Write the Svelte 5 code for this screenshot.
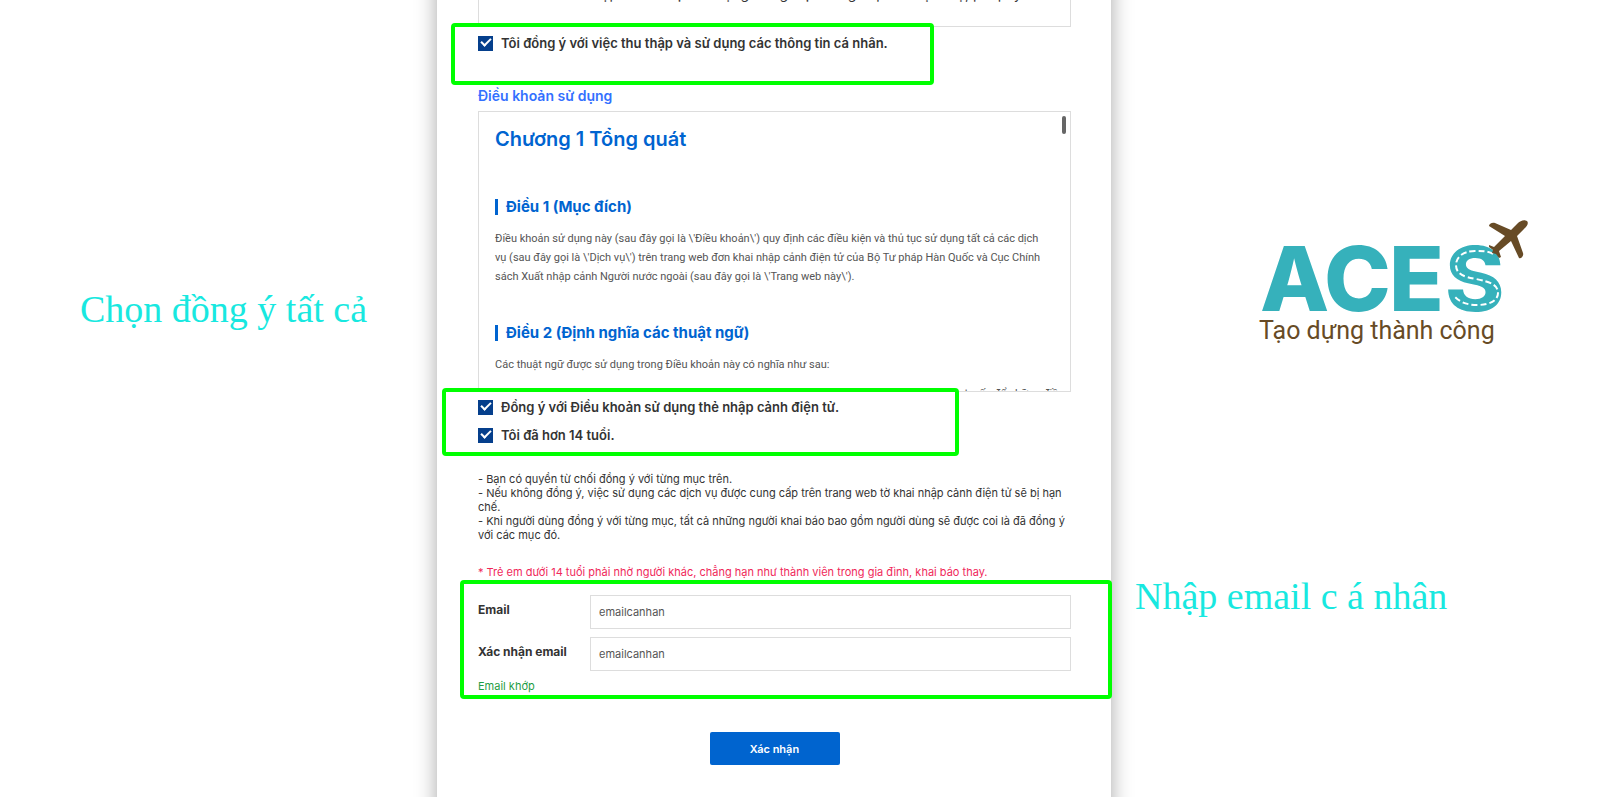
<script lang="ts">
  let agreePrivacy = $state(true);
  let agreeTerms = $state(true);
  let over14 = $state(true);
  let email = $state("emailcanhan");
  let emailConfirm = $state("emailcanhan");

  let matched = $derived(email !== "" && email === emailConfirm);

  const notes = [
    "- Bạn có quyền từ chối đồng ý với từng mục trên.",
    "- Nếu không đồng ý, việc sử dụng các dịch vụ được cung cấp trên trang web tờ khai nhập cảnh điện tử sẽ bị hạn chế.",
    "- Khi người dùng đồng ý với từng mục, tất cả những người khai báo bao gồm người dùng sẽ được coi là đã đồng ý với các mục đó.",
  ];
</script>

<div class="page">
  <aside class="left">
    <p class="caption">Chọn đồng ý tất cả</p>
  </aside>

  <main class="panel">
    <div class="privacy">
      <p>nhập cảnh được sử dụng trong việc cung cấp các dịch vụ, pháp lý</p>
    </div>

    <div class="group first">
      <label class="check">
        <input type="checkbox" bind:checked={agreePrivacy} />
        Tôi đồng ý với việc thu thập và sử dụng các thông tin cá nhân.
      </label>
      <div class="mark"></div>
    </div>

    <h1>Điều khoản sử dụng</h1>
    <section class="terms">
      <h2>Chương 1 Tổng quát</h2>
      <h3>Điều 1 (Mục đích)</h3>
      <p>
        Điều khoản sử dụng này (sau đây gọi là \'Điều khoản\') quy định các điều
        kiện và thủ tục sử dụng tất cả các dịch<br />vụ (sau đây gọi là \'Dịch
        vụ\') trên trang web đơn khai nhập cảnh điện tử của Bộ Tư pháp Hàn Quốc
        và Cục Chính<br />sách Xuất nhập cảnh Người nước ngoài (sau đây gọi là
        \'Trang web này\').
      </p>
      <h3>Điều 2 (Định nghĩa các thuật ngữ)</h3>
      <p>Các thuật ngữ được sử dụng trong Điều khoản này có nghĩa như sau:</p>
      <p class="clipped">
        1. Tờ khai nhập cảnh điện tử là trang web do Bộ Tư pháp cung cấp cho
        người dùng khai báo trực tuyến để những điều
      </p>
      <span class="thumb"></span>
    </section>

    <div class="group second">
      <label class="check">
        <input type="checkbox" bind:checked={agreeTerms} />
        Đồng ý với Điều khoản sử dụng thẻ nhập cảnh điện tử.
      </label>
      <label class="check">
        <input type="checkbox" bind:checked={over14} />
        Tôi đã hơn 14 tuổi.
      </label>
      <div class="mark"></div>
    </div>

    <div class="notes">
      {#each notes as note}
        <p>{note}</p>
      {/each}
    </div>

    <p class="warning">
      * Trẻ em dưới 14 tuổi phải nhờ người khác, chẳng hạn như thành viên trong
      gia đình, khai báo thay.
    </p>

    <div class="group third">
      <div class="field">
        <label for="email">Email</label>
        <input id="email" type="text" bind:value={email} />
      </div>
      <div class="field">
        <label for="email-confirm">Xác nhận email</label>
        <input id="email-confirm" type="text" bind:value={emailConfirm} />
      </div>
      <p class="status">{matched ? "Email khớp" : ""}</p>
      <div class="mark"></div>
    </div>

    <button class="submit">Xác nhận</button>
  </main>

  <aside class="right">
    <svg class="logo" viewBox="0 0 280 135" role="img" aria-label="ACES">
      <text class="brand" x="5 69 134 190" y="96">ACES</text>
      <path
        class="road"
        d="M238 39C233 36 227 36 220 36C207 36 201 43 201 50C201 59 209 62 221 64C236 67 243 70 243 78C243 86 234 90 222 90C212 90 205 87 200 82"
      />
      <path
        class="plane"
        d="M272 6C269 4 265 6 263 8L256 15L240 8C237 7 234 9 234 11L250 21L239 32L234 30V32L238 35L237 38L241 39L244 43L246 42L244 36L256 26L264 43C266 44 269 41 268 38L262 21L269 14C272 11 274 8 272 6Z"
      />
      <text class="slogan" x="4" y="124">Tạo dựng thành công</text>
    </svg>
    <p class="caption">Nhập email c á nhân</p>
  </aside>
</div>

<style>
  :global(body) {
    margin: 0;
    background: #fff;
  }

  .page {
    display: grid;
    grid-template-columns: minmax(0, 437fr) minmax(0, 674fr) minmax(0, 489fr);
    min-height: 100vh;
    overflow: hidden;
    font-family: Inter, "Noto Sans", sans-serif;
    font-size: 11px;
    color: #333;
  }

  p,
  h1,
  h2,
  h3 {
    margin: 0;
  }

  .caption {
    font-family: "Liberation Serif", serif;
    font-size: 38px;
    line-height: 44px;
    color: #18e8e0;
    white-space: nowrap;
  }

  .left {
    padding: 287px 0 0 80px;
  }

  .right {
    padding: 215px 0 0 24px;
  }

  .right .logo {
    display: block;
    width: 280px;
    margin: 0 0 224px 120px;
  }

  /* runs past the top and bottom so the side shadows stay even */
  .panel {
    box-sizing: border-box;
    margin: -30px 0;
    padding: 30px 40px 60px 41px;
    background: #fff;
    box-shadow: 0 0 20px rgba(0, 0, 0, 0.35);
  }

  .privacy {
    box-sizing: border-box;
    height: 27px;
    padding-left: 106px;
    overflow: hidden;
    border: 1px solid #ddd;
    border-top: 0;
  }

  .privacy p {
    margin-top: -14px;
    font-size: 14px;
    line-height: 16px;
    white-space: nowrap;
  }

  .group {
    position: relative;
  }

  .mark {
    position: absolute;
    border: 4px solid #0f0;
    border-radius: 4px;
    pointer-events: none;
  }

  .first {
    padding: 6px 0 34px;
  }

  .first .mark {
    inset: -4px 137px 2px -27px;
  }

  .check {
    display: flex;
    align-items: center;
    gap: 8px;
    height: 20px;
    font-size: 13px;
    font-weight: 600;
    white-space: nowrap;
  }

  .check input {
    display: grid;
    place-items: center;
    width: 15px;
    height: 15px;
    margin: 0;
    appearance: none;
    background: #053f8c;
  }

  .check input:checked::before {
    content: "";
    width: 10px;
    height: 6px;
    margin-bottom: 4px;
    border: solid #fff;
    border-width: 0 0 2px 2px;
    box-sizing: border-box;
    transform: rotate(-45deg);
  }

  h1 {
    font-size: 14px;
    font-weight: 600;
    line-height: 18px;
    color: #3370ff;
  }

  .terms {
    position: relative;
    box-sizing: border-box;
    height: 281px;
    margin-top: 6px;
    padding: 15px 16px 0;
    overflow: hidden;
    border: 1px solid #ddd;
    color: #555;
  }

  h2 {
    margin-bottom: 48px;
    font-size: 20px;
    font-weight: 600;
    line-height: 24px;
    color: #0064d0;
  }

  h3 {
    margin-bottom: 14px;
    padding-left: 8px;
    border-left: 3px solid #0064d0;
    font-size: 15px;
    font-weight: 700;
    line-height: 16px;
    color: #0064d0;
  }

  .terms p {
    font-family: Roboto, "Noto Sans", sans-serif;
    line-height: 19px;
    white-space: nowrap;
  }

  .terms p + h3 {
    margin-top: 39px;
  }

  .terms .clipped {
    margin-top: 10px;
  }

  .thumb {
    position: absolute;
    top: 4px;
    right: 4px;
    width: 4px;
    height: 18px;
    border-radius: 2px;
    background: #666;
  }

  .second {
    display: flex;
    flex-direction: column;
    gap: 8px;
    padding-top: 5px;
  }

  .second .mark {
    inset: -4px 112px -11px -36px;
  }

  .notes {
    margin-top: 27px;
    line-height: 14px;
  }

  .warning {
    margin-top: 22px;
    line-height: 16px;
    color: #f0285a;
    white-space: nowrap;
  }

  .third {
    display: flex;
    flex-direction: column;
    gap: 8px;
    padding-top: 15px;
  }

  .third .mark {
    inset: 0 -41px -4px -18px;
  }

  .field {
    display: flex;
  }

  .field label {
    width: 112px;
    padding-top: 6px;
    font-size: 12px;
    font-weight: 700;
    line-height: 18px;
  }

  .field input {
    box-sizing: border-box;
    flex: 1;
    height: 34px;
    padding: 0 8px;
    border: 1px solid #ddd;
    font: inherit;
    color: #555;
  }

  .status {
    height: 16px;
    line-height: 14px;
    color: #1f9d45;
  }

  .submit {
    display: block;
    width: 130px;
    height: 33px;
    margin: 37px auto 0;
    border: 0;
    border-radius: 2px;
    background: #0064cf;
    font: 600 11px Inter, sans-serif;
    color: #fff;
  }

  .brand {
    font-size: 90px;
    font-weight: 800;
    fill: #36b1bb;
  }

  .slogan {
    font-family: Roboto, sans-serif;
    font-size: 25px;
    fill: #674b26;
  }

  .road {
    fill: none;
    stroke: #fff;
    stroke-width: 2;
    stroke-dasharray: 6 3;
  }

  .plane {
    fill: #674b26;
  }
</style>
